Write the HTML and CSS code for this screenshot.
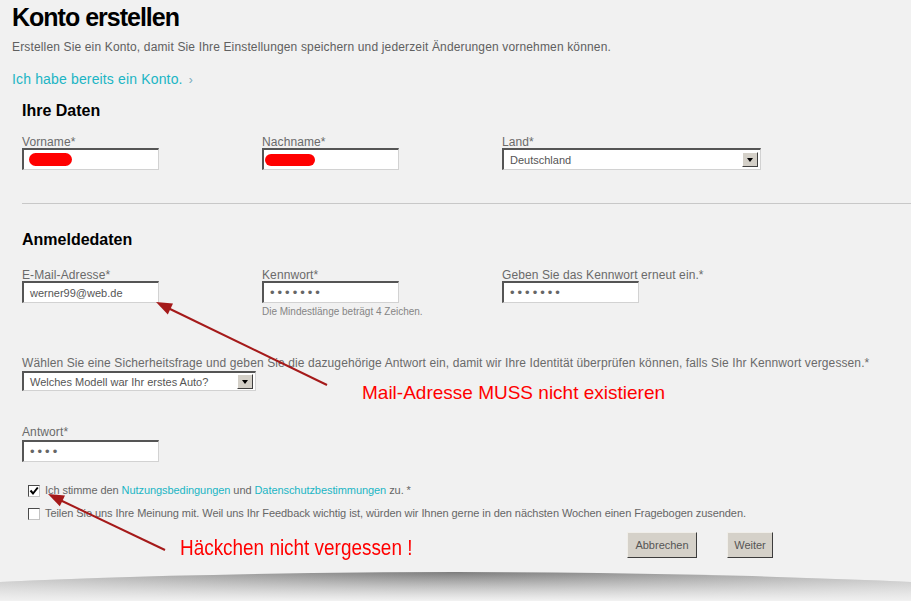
FILE: index.html
```html
<!DOCTYPE html>
<html lang="de">
<head>
    <meta charset="UTF-8">
    <meta name="viewport" content="width=device-width, initial-scale=1.0">
    <link rel="stylesheet" href="styles.css">
    <title>Konto erstellen</title>
</head>
<body>
    <div class="page">
        <h1>Konto erstellen</h1>
        <p class="intro">Erstellen Sie ein Konto, damit Sie Ihre Einstellungen speichern und jederzeit Änderungen vornehmen können.</p>
        <a class="login-link" href="#">Ich habe bereits ein Konto. <span class="chev">›</span></a>

        <!-- Ihre Daten -->
        <section class="block">
            <h2>Ihre Daten</h2>
            <div class="row">
                <div class="col">
                    <label>Vorname*</label>
                    <div class="field"><span class="scribble"></span></div>
                </div>
                <div class="col">
                    <label>Nachname*</label>
                    <div class="field"><span class="scribble scribble-wide"></span></div>
                </div>
                <div class="col">
                    <label>Land*</label>
                    <div class="select select-land">
                        <span>Deutschland</span>
                        <span class="select-btn"><span class="tri"></span></span>
                    </div>
                </div>
            </div>
        </section>

        <hr class="divider">

        <!-- Anmeldedaten -->
        <section class="block login">
            <h2>Anmeldedaten</h2>
            <div class="row">
                <div class="col">
                    <label>E-Mail-Adresse*</label>
                    <div class="field">werner99@web.de</div>
                </div>
                <div class="col">
                    <label>Kennwort*</label>
                    <div class="field dots">•••••••</div>
                    <div class="hint">Die Mindestlänge beträgt 4 Zeichen.</div>
                </div>
                <div class="col">
                    <label>Geben Sie das Kennwort erneut ein.*</label>
                    <div class="field dots">•••••••</div>
                </div>
            </div>

            <label class="question">Wählen Sie eine Sicherheitsfrage und geben Sie die dazugehörige Antwort ein, damit wir Ihre Identität überprüfen können, falls Sie Ihr Kennwort vergessen.*</label>
            <div class="select select-question">
                <span>Welches Modell war Ihr erstes Auto?</span>
                <span class="select-btn"><span class="tri"></span></span>
            </div>

            <label class="answer">Antwort*</label>
            <div class="field dots">••••</div>

            <div class="checks">
                <div class="check">
                    <span class="box"><svg width="10" height="10" viewBox="0 0 10 10"><path d="M1.5 4.5 L4 7.5 L8.8 1.5" fill="none" stroke="#000" stroke-width="2"/></svg></span>
                    <span>Ich stimme den <a href="#">Nutzungsbedingungen</a> und <a href="#">Datenschutzbestimmungen</a> zu. *</span>
                </div>
                <div class="check">
                    <span class="box"></span>
                    <span>Teilen Sie uns Ihre Meinung mit. Weil uns Ihr Feedback wichtig ist, würden wir Ihnen gerne in den nächsten Wochen einen Fragebogen zusenden.</span>
                </div>
            </div>
        </section>

        <div class="buttons">
            <button class="btn btn-cancel">Abbrechen</button>
            <button class="btn btn-next">Weiter</button>
        </div>
    </div>
    <div class="fold"></div>

    <!-- annotations drawn over the screenshot -->
    <svg class="notes" width="911" height="601" viewBox="0 0 911 601">
        <line x1="327" y1="385" x2="168" y2="308" stroke="#a51a1a" stroke-width="2"/>
        <polygon points="156,302 173,303.6 167.8,314.4" fill="#a51a1a"/>
        <line x1="165" y1="550" x2="60" y2="500" stroke="#a51a1a" stroke-width="2"/>
        <polygon points="48,494 65,495.5 59.8,506.3" fill="#a51a1a"/>
    </svg>
    <div class="note note-mail">Mail-Adresse MUSS nicht existieren</div>
    <div class="note note-check">Häckchen nicht vergessen !</div>
</body>
</html>
```

FILE: styles.css
```css
body {
    margin: 0;
    background-color: #f1f1f1;
    font-family: "Liberation Sans", Arial, sans-serif;
    color: #666;
}

.page {
    padding: 2px 0 0 12px;
}

h1 {
    margin: 0;
    font-size: 25px;
    line-height: 30px;
    letter-spacing: -1px;
    color: #000;
}

.intro {
    margin: 8px 0 0;
    font-size: 12px;
    line-height: 14px;
    letter-spacing: 0.15px;
    color: #606060;
}

.login-link {
    display: block;
    width: max-content;
    margin-top: 17px;
    font-size: 14px;
    line-height: 16px;
    letter-spacing: 0.15px;
    color: #1bb5c4;
    text-decoration: none;
}
.chev {
    font-size: 12px;
    margin-left: 2px;
    color: #7ab;
}

.block {
    padding-left: 10px;
}
.block h2 {
    margin: 13px 0 15px;
    font-size: 16px;
    line-height: 20px;
    color: #000;
}
.login h2 {
    margin: 26px 0 19px;
}

.divider {
    height: 0;
    margin: 33px 0 0 10px;
    border: 0;
    border-top: 1px solid #c8c8c8;
}

.row {
    display: grid;
    grid-template-columns: 240px 240px 240px;
}

label {
    display: block;
    font-size: 12px;
    line-height: 12px;
    letter-spacing: 0.1px;
    color: #6a6a6a;
}

.field {
    width: 137px;
    height: 22px;
    box-sizing: border-box;
    display: flex;
    align-items: center;
    padding-left: 6px;
    background: #fff;
    border-style: solid;
    border-width: 2px 1px 1px 2px;
    border-color: #555 #d2d2d2 #d2d2d2 #555;
    font-size: 11px;
    color: #555;
}
.dots {
    font-size: 13px;
    letter-spacing: 3px;
    color: #666;
}

.scribble {
    display: inline-block;
    width: 43px;
    height: 13px;
    margin-left: -1px;
    border-radius: 7px;
    background: #f00;
    filter: blur(0.7px);
}
.scribble-wide {
    width: 50px;
    margin-left: -5px;
    height: 12px;
}

.select {
    height: 20px;
    box-sizing: border-box;
    display: flex;
    align-items: center;
    justify-content: space-between;
    padding-left: 6px;
    background: #fff;
    border-style: solid;
    border-width: 2px 1px 1px 2px;
    border-color: #555 #d2d2d2 #d2d2d2 #555;
    font-size: 11px;
    color: #555;
}
.select-land {
    width: 259px;
    height: 22px;
}
.select-question {
    width: 234px;
    margin-top: 2px;
}
.select-btn {
    width: 16px;
    height: 15px;
    box-sizing: border-box;
    margin-right: 2px;
    display: flex;
    align-items: center;
    justify-content: center;
    background: #d4d0c8;
    border: 1px solid;
    border-color: #fff #404040 #404040 #fff;
}
.tri {
    width: 0;
    height: 0;
    border-left: 3.5px solid transparent;
    border-right: 3.5px solid transparent;
    border-top: 4px solid #000;
}

.hint {
    margin-top: 3px;
    font-size: 10px;
    line-height: 12px;
    color: #858585;
}

.question {
    margin-top: 39px;
}
.answer {
    margin-top: 35px;
    margin-bottom: 2px;
}

.checks {
    margin-top: 22px;
    padding-left: 6px;
    display: flex;
    flex-direction: column;
    gap: 10px;
}
.check {
    display: flex;
    align-items: center;
    gap: 5px;
    font-size: 11px;
    line-height: 13px;
    letter-spacing: -0.07px;
    color: #666;
}
.check a {
    color: #1bb5c4;
    text-decoration: none;
}
.box {
    width: 12px;
    height: 12px;
    box-sizing: border-box;
    display: flex;
    align-items: center;
    justify-content: center;
    background: #fff;
    border: 1px solid;
    border-color: #4a4a4a #c4c4c4 #c4c4c4 #4a4a4a;
}

.buttons {
    margin-top: 12px;
    padding-right: 138px;
    display: flex;
    justify-content: flex-end;
    gap: 30px;
}
.btn {
    height: 26px;
    padding: 0;
    background: #d5d1c9;
    border: 1px solid;
    border-color: #f0eee9 #3c3c3c #3c3c3c #f0eee9;
    font-family: "Liberation Sans", Arial, sans-serif;
    font-size: 11px;
    color: #555;
}
.btn-cancel { width: 70px; }
.btn-next { width: 46px; }

.fold {
    margin-top: 14px;
    height: 28px;
    clip-path: ellipse(1460px 200px at 50% 200px);
    background:
        linear-gradient(to bottom, rgba(240, 240, 240, 0) 0%, #efefef 100%),
        radial-gradient(ellipse 60% 220% at 50% 0%, #7c7c7c 0%, #a9a9a9 55%, #cfcfcf 100%);
}

.notes {
    position: absolute;
    left: 0;
    top: 0;
    pointer-events: none;
}
.note {
    position: absolute;
    color: #f00;
    white-space: nowrap;
}
.note-mail {
    left: 362px;
    top: 383px;
    font-size: 19px;
    line-height: 20px;
}
.note-check {
    left: 180px;
    top: 536px;
    font-size: 22px;
    line-height: 24px;
    transform: scaleX(0.86);
    transform-origin: left center;
}
```
